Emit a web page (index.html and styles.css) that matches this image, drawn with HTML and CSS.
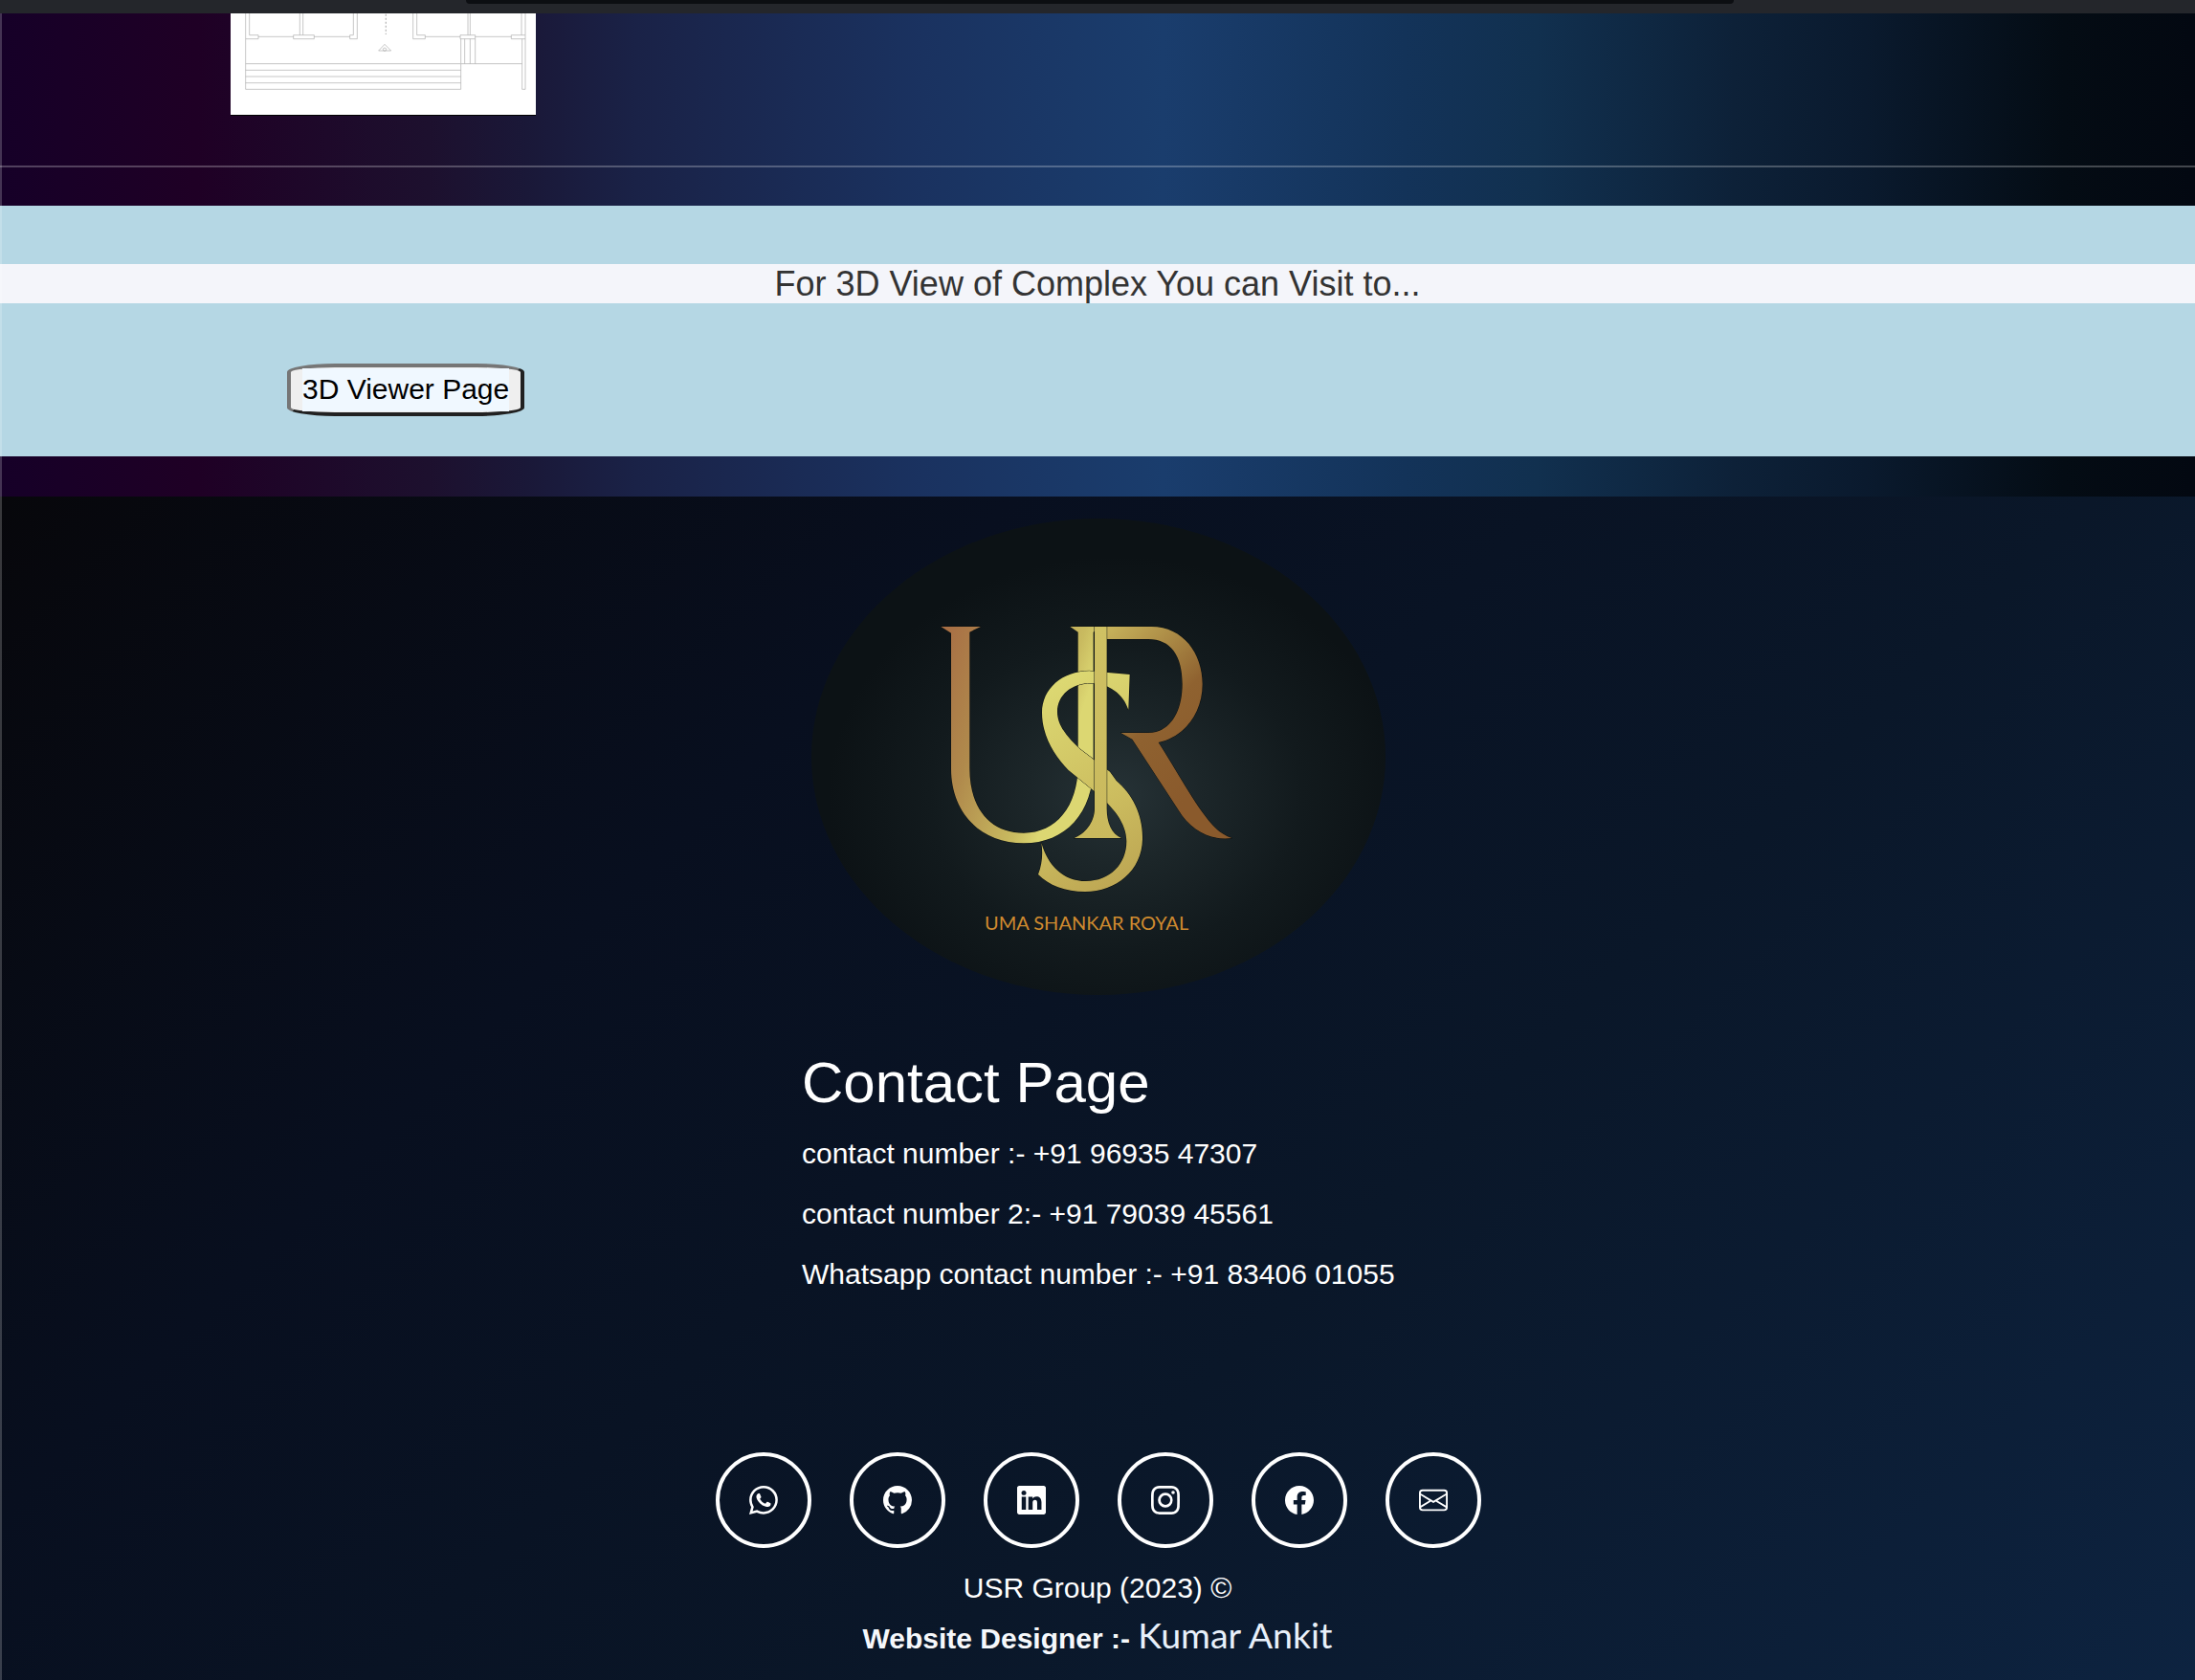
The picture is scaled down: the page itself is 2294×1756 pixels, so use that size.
FILE: index.html
```html
<!DOCTYPE html>
<html lang="en">
<head>
<meta charset="utf-8">
<title>USR Group</title>
<link rel="stylesheet" href="styles.css">
</head>
<body>
<div class="topbar"><div class="topbar-notch"></div></div>
<main class="main">
  <section class="plan-row">
    <div class="plan">
      <svg class="plan-svg" viewBox="18 12 957 318" xmlns="http://www.w3.org/2000/svg">
        <g fill="none" stroke="#aaa" stroke-width="2">
          <path d="M65 12V92H105V80H77V12"/>
          <path d="M105 85H215M280 85H392M628 85H738M785 85H898"/>
          <path d="M215 92H280V80H215ZM235 12V80M245 12V80"/>
          <path d="M392 80V92H415V12M403 12V80H392"/>
          <path d="M590 12V92H628V80H602V12"/>
          <path d="M738 92H785V80H738ZM762 12V80M769 12V80"/>
          <path d="M898 92H942V80H898ZM930 12V80M942 12V80"/>
          <path d="M65 92V250H740V92M65 190H740M65 210H740M65 230H740"/>
          <path d="M65 170H932" stroke="#c4c4c4" stroke-width="3"/>
          <path d="M752 92V170M769 92V170M785 92V170"/>
          <path d="M932 92V250H942V92"/>
          <path d="M482 129L501 109L521 129Z"/>
          <path d="M505 14V78" stroke-dasharray="6 6" stroke="#bbb" stroke-width="4"/>
          <circle cx="501" cy="125" r="5"/>
        </g>
      </svg>
    </div>
  </section>
  <hr class="rule">
  <section class="band">
    <h3 class="band-title">For 3D View of Complex You can Visit to...</h3>
    <div class="band-action"><button class="viewer-btn" type="button"><span class="viewer-label">3D Viewer Page</span></button></div>
  </section>
</main>
<footer class="footer">
  <div class="logo">
    <svg class="logo-mark" viewBox="0 0 990 930" xmlns="http://www.w3.org/2000/svg">
      <defs>
        <linearGradient id="gu" gradientUnits="userSpaceOnUse" x1="40" y1="100" x2="500" y2="260">
          <stop offset="0" stop-color="#a86f45"/>
          <stop offset=".4" stop-color="#b08a4c"/>
          <stop offset=".85" stop-color="#c9bb60"/>
          <stop offset="1" stop-color="#dcd772"/>
        </linearGradient>
        <linearGradient id="gr" gradientUnits="userSpaceOnUse" x1="520" y1="100" x2="900" y2="500">
          <stop offset="0" stop-color="#c6b15a"/>
          <stop offset=".55" stop-color="#8f6230"/>
          <stop offset="1" stop-color="#8a5a2c"/>
        </linearGradient>
        <linearGradient id="gs" gradientUnits="userSpaceOnUse" x1="360" y1="250" x2="680" y2="820">
          <stop offset="0" stop-color="#dcd872"/>
          <stop offset=".6" stop-color="#ccbd5f"/>
          <stop offset="1" stop-color="#bda653"/>
        </linearGradient>
        <linearGradient id="gi" gradientUnits="userSpaceOnUse" x1="540" y1="50" x2="540" y2="710">
          <stop offset="0" stop-color="#cfc163"/>
          <stop offset="1" stop-color="#c9b95d"/>
        </linearGradient>
      </defs>
      <g stroke="#0a0f10" stroke-width="3" paint-order="stroke">
        <path fill="url(#gr)" d="M540 45H700C800 45 860 130 860 225C860 320 800 392 722 408C775 490 840 610 890 665C910 688 930 700 952 708C885 716 825 685 785 620L640 398L604 378H690C760 378 797 310 797 225C797 135 760 84 690 84H540Z"/>
        <path fill="url(#gu)" d="M40 45H165L130 62V490C130 615 195 692 300 692C400 692 470 610 470 480V62L445 45H546L518 62V480C518 630 430 724 300 724C165 724 72 630 72 490V65Z"/>
        <path fill="url(#gs)" fill-rule="evenodd" d="M632 195L628 306C612 255 565 222 510 222C450 222 405 260 405 312C405 360 445 400 480 432L570 500L590 528C640 570 674 635 672 712C670 810 590 876 492 876C430 876 378 856 345 822C358 790 360 755 355 722C375 795 425 843 495 843C570 843 622 790 622 718C622 660 580 610 520 560L440 495C395 450 357 385 357 315C357 240 420 185 505 184Z"/>
        <path fill="url(#gi)" d="M522 45H560V615C560 660 575 695 606 708H458C490 695 522 660 522 615Z"/>
      </g>
    </svg>
    <div class="logo-text">UMA SHANKAR ROYAL</div>
  </div>
  <div class="contact">
    <h2 class="contact-title">Contact Page</h2>
    <p class="contact-line">contact number :- +91 96935 47307</p>
    <p class="contact-line">contact number 2:- +91 79039 45561</p>
    <p class="contact-line">Whatsapp contact number :- +91 83406 01055</p>
  </div>
  <nav class="social">
    <a class="social-link" href="#" aria-label="WhatsApp"><svg class="social-icon" viewBox="0 0 16 16"><path d="M13.601 2.326A7.854 7.854 0 0 0 7.994 0C3.627 0 .068 3.558.064 7.926c0 1.399.366 2.76 1.057 3.965L0 16l4.204-1.102a7.933 7.933 0 0 0 3.79.965h.004c4.368 0 7.926-3.558 7.93-7.93A7.898 7.898 0 0 0 13.6 2.326zM7.994 14.521a6.573 6.573 0 0 1-3.356-.92l-.24-.144-2.494.654.666-2.433-.156-.251a6.56 6.56 0 0 1-1.007-3.505c0-3.626 2.957-6.584 6.591-6.584a6.56 6.56 0 0 1 4.66 1.931 6.557 6.557 0 0 1 1.928 4.66c-.004 3.639-2.961 6.592-6.592 6.592zm3.615-4.934c-.197-.099-1.17-.578-1.353-.646-.182-.065-.315-.099-.445.099-.133.197-.513.646-.627.775-.114.133-.232.148-.43.05-.197-.1-.836-.308-1.592-.985-.59-.525-.985-1.175-1.103-1.372-.114-.198-.011-.304.088-.403.087-.088.197-.232.296-.346.1-.114.133-.198.198-.33.065-.134.034-.248-.015-.347-.05-.099-.445-1.076-.612-1.47-.16-.389-.323-.335-.445-.34-.114-.007-.247-.007-.38-.007a.729.729 0 0 0-.529.247c-.182.198-.691.677-.691 1.654 0 .977.71 1.916.81 2.049.098.133 1.394 2.132 3.383 2.992.47.205.84.326 1.129.418.475.152.904.129 1.246.08.38-.058 1.171-.48 1.338-.943.164-.464.164-.86.114-.943-.049-.084-.182-.133-.38-.232z"/></svg></a>
    <a class="social-link" href="#" aria-label="GitHub"><svg class="social-icon" viewBox="0 0 16 16"><path d="M8 0C3.58 0 0 3.58 0 8c0 3.54 2.29 6.53 5.47 7.59.4.07.55-.17.55-.38 0-.19-.01-.82-.01-1.49-2.01.37-2.53-.49-2.69-.94-.09-.23-.48-.94-.82-1.13-.28-.15-.68-.52-.01-.53.63-.01 1.08.58 1.23.82.72 1.21 1.87.87 2.33.66.07-.52.28-.87.51-1.07-1.78-.2-3.64-.89-3.64-3.95 0-.87.31-1.59.82-2.15-.08-.2-.36-1.02.08-2.12 0 0 .67-.21 2.2.82.64-.18 1.32-.27 2-.27.68 0 1.36.09 2 .27 1.53-1.04 2.2-.82 2.2-.82.44 1.1.16 1.92.08 2.12.51.56.82 1.27.82 2.15 0 3.07-1.87 3.75-3.65 3.95.29.25.54.73.54 1.48 0 1.07-.01 1.93-.01 2.2 0 .21.15.46.55.38A8.012 8.012 0 0 0 16 8c0-4.42-3.58-8-8-8z"/></svg></a>
    <a class="social-link" href="#" aria-label="LinkedIn"><svg class="social-icon" viewBox="0 0 16 16"><path d="M0 1.146C0 .513.526 0 1.175 0h13.65C15.474 0 16 .513 16 1.146v13.708c0 .633-.526 1.146-1.175 1.146H1.175C.526 16 0 15.487 0 14.854V1.146zm4.943 12.248V6.169H2.542v7.225h2.401zm-1.2-8.212c.837 0 1.358-.554 1.358-1.248-.015-.709-.52-1.248-1.342-1.248-.822 0-1.359.54-1.359 1.248 0 .694.521 1.248 1.327 1.248h.016zm4.908 8.212V9.359c0-.216.016-.432.08-.586.173-.431.568-.878 1.232-.878.869 0 1.216.662 1.216 1.634v3.865h2.401V9.25c0-2.22-1.184-3.252-2.764-3.252-1.274 0-1.845.7-2.165 1.193v.025h-.016a5.54 5.54 0 0 1 .016-.025V6.169h-2.4c.03.678 0 7.225 0 7.225h2.4z"/></svg></a>
    <a class="social-link" href="#" aria-label="Instagram"><svg class="social-icon" viewBox="0 0 16 16"><path d="M8 0C5.829 0 5.556.01 4.703.048 3.85.088 3.269.222 2.76.42a3.917 3.917 0 0 0-1.417.923A3.927 3.927 0 0 0 .42 2.76C.222 3.268.087 3.85.048 4.7.01 5.555 0 5.827 0 8.001c0 2.172.01 2.444.048 3.297.04.852.174 1.433.372 1.942.205.526.478.972.923 1.417.444.445.89.719 1.416.923.51.198 1.09.333 1.942.372C5.555 15.99 5.827 16 8 16s2.444-.01 3.298-.048c.851-.04 1.434-.174 1.943-.372a3.916 3.916 0 0 0 1.416-.923c.445-.445.718-.891.923-1.417.197-.509.332-1.09.372-1.942C15.99 10.445 16 10.173 16 8s-.01-2.445-.048-3.299c-.04-.851-.175-1.433-.372-1.941a3.926 3.926 0 0 0-.923-1.417A3.911 3.911 0 0 0 13.24.42c-.51-.198-1.092-.333-1.943-.372C10.443.01 10.172 0 7.998 0h.003zm-.717 1.442h.718c2.136 0 2.389.007 3.232.046.78.035 1.204.166 1.486.275.373.145.64.319.92.599.28.28.453.546.598.92.11.281.24.705.275 1.485.039.843.047 1.096.047 3.231s-.008 2.389-.047 3.232c-.035.78-.166 1.203-.275 1.485a2.47 2.47 0 0 1-.599.919c-.28.28-.546.453-.92.598-.28.11-.704.24-1.485.276-.843.038-1.096.047-3.232.047s-2.39-.009-3.233-.047c-.78-.036-1.203-.166-1.485-.276a2.478 2.478 0 0 1-.92-.598 2.48 2.48 0 0 1-.6-.92c-.109-.281-.24-.705-.275-1.485-.038-.843-.046-1.096-.046-3.233 0-2.136.008-2.388.046-3.231.036-.78.166-1.204.276-1.486.145-.373.319-.64.599-.92.28-.28.546-.453.92-.598.282-.11.705-.24 1.485-.276.738-.034 1.024-.044 2.515-.045v.002zm4.988 1.328a.96.96 0 1 0 0 1.92.96.96 0 0 0 0-1.92zm-4.27 1.122a4.109 4.109 0 1 0 0 8.217 4.109 4.109 0 0 0 0-8.217zm0 1.441a2.667 2.667 0 1 1 0 5.334 2.667 2.667 0 0 1 0-5.334z"/></svg></a>
    <a class="social-link" href="#" aria-label="Facebook"><svg class="social-icon" viewBox="0 0 16 16"><path d="M16 8.049c0-4.446-3.582-8.05-8-8.05C3.58 0-.002 3.603-.002 8.05c0 4.017 2.926 7.347 6.75 7.951v-5.625h-2.03V8.05H6.75V6.275c0-2.017 1.195-3.131 3.022-3.131.876 0 1.791.157 1.791.157v1.98h-1.009c-.993 0-1.303.621-1.303 1.258v1.51h2.218l-.354 2.326H9.25V16c3.824-.604 6.75-3.934 6.75-7.951z"/></svg></a>
    <a class="social-link" href="#" aria-label="Email"><svg class="social-icon" viewBox="0 0 16 16"><path d="M0 4a2 2 0 0 1 2-2h12a2 2 0 0 1 2 2v8a2 2 0 0 1-2 2H2a2 2 0 0 1-2-2V4Zm2-1a1 1 0 0 0-1 1v.217l7 4.2 7-4.2V4a1 1 0 0 0-1-1H2Zm13 2.383-4.708 2.825L15 11.105V5.383Zm-.034 6.876-5.64-3.471L8 9.583l-1.326-.795-5.64 3.47A1 1 0 0 0 2 13h12a1 1 0 0 0 .966-.741ZM1 11.105l4.708-2.897L1 5.383v5.722Z"/></svg></a>
  </nav>
  <p class="copyright">USR Group (2023) ©</p>
  <p class="credit"><b class="credit-label">Website Designer :- </b><span class="credit-name">Kumar Ankit</span></p>
</footer>
</body>
</html>
```

FILE: styles.css
```css
* { box-sizing: border-box; }
html, body { margin: 0; padding: 0; }
body {
  position: relative;
  width: 2294px;
  height: 1756px;
  overflow: hidden;
  background: #050507;
  font-family: "Liberation Sans", Arial, sans-serif;
  color: #fff;
}
body::before {
  content: "";
  position: absolute;
  left: 0;
  top: 14px;
  bottom: 0;
  width: 2px;
  background: rgba(255, 255, 255, .2);
}
.topbar {
  height: 14px;
  background: #24262b;
  padding: 0 482px 0 487px;
}
.topbar-notch {
  height: 4px;
  background: #0c0e12;
  border-radius: 0 0 8px 8px;
}
.main {
  height: 505px;
  background: linear-gradient(90deg, #160028 0, #1f0025 9%, #1d102e 19.5%, #1a1838 24%, #1a2247 29%, #1a3260 42%, #1a3d6d 53%, #133359 64%, #11304f 70%, #0d2138 79%, #0a1a2e 85%, #040c14 94%, #030811 100%);
}
.plan-row { height: 106px; padding-left: 241px; }
.plan {
  width: 319px;
  height: 106px;
  background: #fff;
  box-shadow: 0 1px 0 #000;
}
.plan-svg { display: block; width: 319px; height: 106px; }
.rule {
  margin: 53px 0 0;
  height: 2px;
  border: 0;
  background: rgba(255, 255, 255, .25);
}
.band {
  margin-top: 40px;
  height: 262px;
  padding-top: 61px;
  background: #b5d7e4;
}
.band-title {
  margin: 0;
  height: 41px;
  line-height: 41px;
  font-size: 36px;
  font-weight: 400;
  text-align: center;
  color: #333;
  background: #f4f5fa;
}
.band-action { margin-top: 63px; padding-left: 300px; }
.viewer-btn {
  display: block;
  width: 248px;
  height: 55px;
  padding: 0;
  background: #efefef;
  border-style: solid;
  border-width: 4px;
  border-color: #767676 #212121 #212121 #767676;
  border-radius: 50px / 9px;
  font: 30px/1 "Liberation Sans", Arial, sans-serif;
  color: #000;
}
.viewer-label {
  display: block;
  width: 216px;
  margin: 0 auto;
  padding-bottom: 2px;
  line-height: 43px;
  background: #f0f8ff;
  white-space: nowrap;
}
.footer {
  height: 1237px;
  padding-top: 23px;
  background: linear-gradient(135deg, #07070b 0, #080f1f 30%, #0a1729 62%, #0d2340 100%);
}
.logo {
  position: relative;
  width: 600px;
  height: 498px;
  margin-left: 848px;
  border-radius: 50%;
  background: radial-gradient(ellipse 50% 50% at 53% 58%, #263236 0, #1c2629 30%, #121a1d 65%, #0c1215 100%);
}
.logo-mark {
  position: absolute;
  left: 122px;
  top: 98px;
  width: 330px;
  height: 310px;
}
.logo-text {
  position: absolute;
  left: 181px;
  top: 409px;
  font: 400 20px/26px Lato, sans-serif;
  color: #cf8a2f;
  white-space: nowrap;
}
.contact { width: 620px; margin: 54px 0 0 838px; }
.contact-title {
  margin: 0 0 4px;
  font-size: 60px;
  line-height: 76px;
  font-weight: 400;
}
.contact-line {
  margin: 0;
  font-size: 30px;
  line-height: 63px;
  white-space: nowrap;
}
.social {
  display: flex;
  gap: 40px;
  margin: 155px 0 0 748px;
}
.social-link {
  display: flex;
  align-items: center;
  justify-content: center;
  width: 100px;
  height: 100px;
  border: 4px solid #fff;
  border-radius: 50%;
  color: #fff;
}
.social-icon { display: block; width: 30px; height: 30px; fill: currentColor; }
.copyright {
  margin: 22px 0 0;
  text-align: center;
  font-size: 30px;
  line-height: 40px;
}
.credit {
  margin: 7px 0 0;
  text-align: center;
  line-height: 44px;
  font-size: 30px;
  white-space: nowrap;
}
.credit-label { font-weight: 700; color: #f6f8fb; }
.credit-name { font-family: Lato, sans-serif; font-size: 37.5px; font-weight: 400; color: #e8f0fa; }
```
